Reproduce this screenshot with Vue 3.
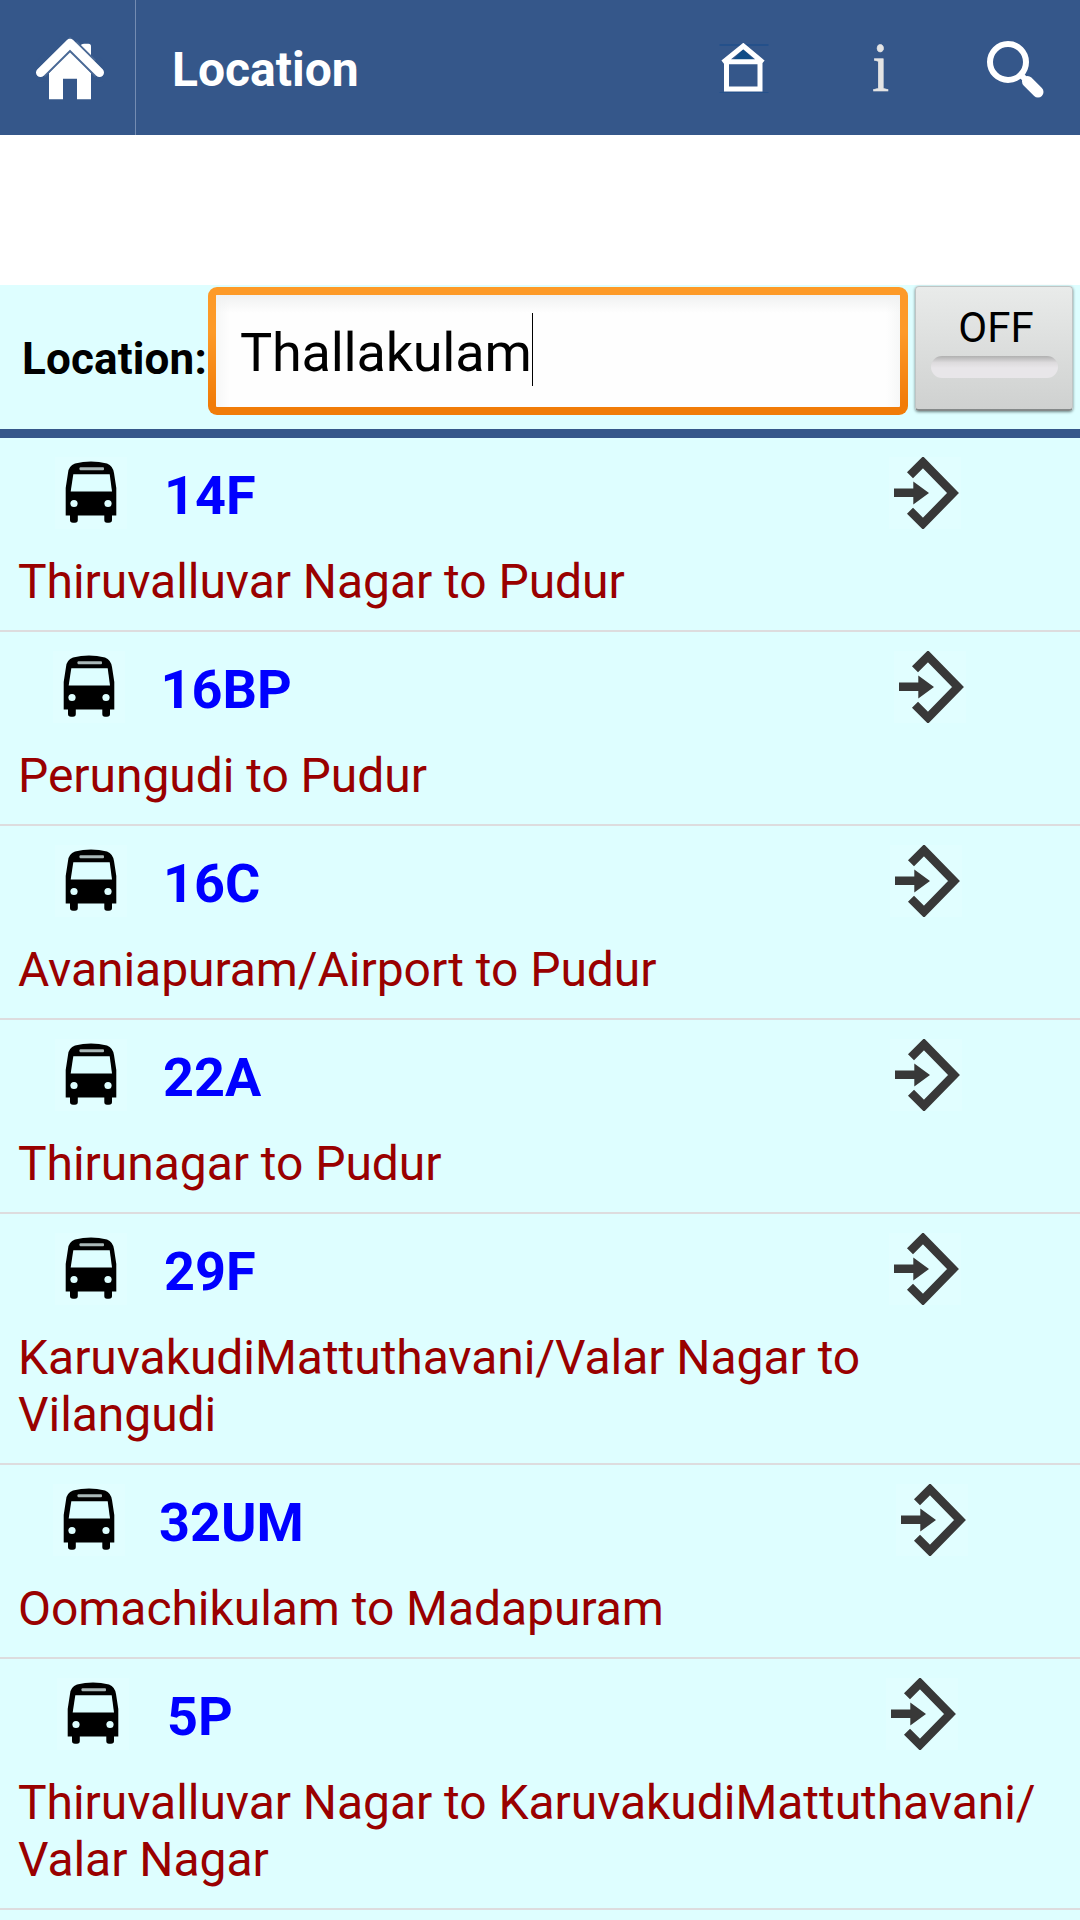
<script setup>
const routes = [
  { no: '14F', name: 'Thiruvalluvar Nagar to Pudur', bus: 55, num: 164, go: 889 },
  { no: '16BP', name: 'Perungudi to Pudur', bus: 53, num: 160.5, go: 894 },
  { no: '16C', name: 'Avaniapuram/Airport to Pudur', bus: 54.5, num: 163, go: 890 },
  { no: '22A', name: 'Thirunagar to Pudur', bus: 54.5, num: 163, go: 890 },
  { no: '29F', name: 'KaruvakudiMattuthavani/Valar Nagar to Vilangudi', bus: 55, num: 164, go: 889 },
  { no: '32UM', name: 'Oomachikulam to Madapuram', bus: 52.5, num: 159, go: 895.5 },
  { no: '5P', name: 'Thiruvalluvar Nagar to KaruvakudiMattuthavani/ Valar Nagar', bus: 56.5, num: 167, go: 885.5 }
]
</script>

<template>
  <div class="screen">
    <header class="bar">
      <div class="home">
        <svg width="72" height="66" viewBox="0 0 72 66">
          <path d="M46 10.500V9.500Q46 7.700 49 7.700H53.500Q56 7.700 56 10.500V20.500z" fill="#fff" />
          <path d="M14 37V63.300H28V42.700H42V63.300H56V37L35 15z" fill="#fff" />
          <path d="M5.500 36.500L35 7.300 64.500 36.500" fill="none" stroke="#4a6996" stroke-width="13" stroke-linejoin="round" />
          <path d="M5.500 36.500L35 7.300 64.500 36.500" fill="none" stroke="#fff" stroke-width="9" stroke-linecap="round" stroke-linejoin="round" />
          <path d="M-2 33L35 -3.500 43 4M62 23L72 33" fill="none" stroke="#35578a" stroke-width="6" />
          <path d="M2 44H13.500M56.500 44H68" stroke="#35578a" stroke-width="3" />
        </svg>
      </div>
      <h1 class="title">Location</h1>
      <svg class="house" width="50" height="50" viewBox="0 0 50 50">
        <path d="M.5 2H49.500M.5 50H49.500" stroke="#24508a" stroke-width="2" />
        <path d="M14 17L24.300 6 35 17z" fill="#0f4c86" />
        <path d="M4 19.500L24.300 3 44 19.500M7.500 18.700V46H41V18.700z" fill="none" stroke="#fff" stroke-width="5" />
      </svg>
      <span class="info">i</span>
      <svg class="search" width="60" height="60" viewBox="0 0 60 60">
        <circle cx="22" cy="22" r="18" fill="none" stroke="#fff" stroke-width="6" />
        <path d="M34 34l7 7" stroke="#fff" stroke-width="6" />
        <path d="M41.500 41.500L52 52" stroke="#fff" stroke-width="11" stroke-linecap="round" />
      </svg>
    </header>
    <section class="filter">
      <label class="label">Location:</label>
      <div class="field"><span>Thallakulam</span><i class="caret"></i></div>
      <button class="toggle"><span>OFF</span><i class="slot"></i></button>
    </section>
    <ul class="list">
      <li v-for="r in routes" :key="r.no" class="row">
        <div class="top">
          <svg class="icon" :style="{ marginLeft: r.bus + 'px' }" width="72" height="72" viewBox="0 0 72 72">
            <path d="M13 16Q13.500 9 20 6.500Q36 2.500 52 6.500Q58 9 59 16L61.300 31V58.500H57V63Q57 65.800 54 65.800H52Q49.300 65.800 49.300 63V58.500H22.800V63Q22.800 65.800 20 65.800H18Q15 65.800 15 63V58.500H10.700V31z" />
            <path d="M18.300 17.300H54.700L57 34.500H15.700z" fill="#defeff" />
            <rect x="24.500" y="10.300" width="24.500" height="3" rx="1" fill="#aab8b8" />
            <circle cx="19" cy="46.500" r="3.600" fill="#defeff" />
            <circle cx="53" cy="46.500" r="3.600" fill="#defeff" />
          </svg>
          <strong class="no" :style="{ width: r.go - r.num + 'px', marginLeft: r.num - r.bus - 72 + 'px' }">{{ r.no }}</strong>
          <svg class="icon" width="72" height="72" viewBox="0 0 72 72">
            <path d="M21 18.300L34 5.300 64 36 34 66.700 21 53.700" fill="none" stroke="#383838" stroke-width="8.500" />
            <path d="M5 31.500H24.300V24.500L40 36 24.300 47.500V40H5z" fill="#383838" />
          </svg>
        </div>
        <p class="name">{{ r.name }}</p>
      </li>
    </ul>
  </div>
</template>

<style>
body { margin: 0; background: #defeff; }
</style>

<style scoped>
.screen { width: 1080px; height: 1920px; overflow: hidden; background: #defeff; font-family: Roboto, sans-serif; color: #000; }
.bar { height: 135px; display: flex; align-items: center; background: #35578a; color: #fff; }
.home { width: 135px; height: 135px; box-sizing: border-box; padding: 36px 0 0 35px; box-shadow: 1px 0 #748cb2; }
.home svg { display: block; }
.title { margin: 4px 0 0; padding-left: 37px; width: 547px; font-size: 48px; line-height: 56px; font-weight: 700; }
.house { margin-bottom: -1px; }
.info { width: 20px; margin-left: 102px; font: 69px/70px "Liberation Serif", serif; color: #e4e4e4; -webkit-text-stroke: .6px #e4e4e4; transform: scaleX(.88); }
.search { margin-left: 94.500px; margin-top: 4px; }
.filter { height: 144px; border-top: 150px solid #fff; border-bottom: 9px solid #35578a; display: flex; align-items: flex-start; }
.label { width: 208px; box-sizing: border-box; padding: 48px 0 0 22px; font-size: 44px; line-height: 52px; font-weight: 700; letter-spacing: .16px; white-space: nowrap; }
.field { width: 700px; height: 128px; margin-top: 2px; box-sizing: border-box; border: 8px solid transparent; border-radius: 9px; padding-left: 24px; display: flex; align-items: flex-start; font-size: 54px; line-height: 64px; letter-spacing: -.22px;
  background: linear-gradient(#f0f1f1, rgba(254, 254, 254, 0) 18px) padding-box, linear-gradient(90deg, #f6f7f7, #fefefe 14px, #fefefe calc(100% - 14px), #f6f7f7) padding-box, linear-gradient(#fd9a28 35%, #f17c08 90%) border-box; }
.field span { margin-top: 26px; }
.caret { width: 1px; height: 73px; margin-top: 18px; background: #000; }
.toggle { width: 158px; height: 125px; margin: 1px 0 0 6.500px; padding: 16px 0 0 2px; border: 1px solid #bfc4c4; border-bottom: 2px solid #858989; border-radius: 4px; background: linear-gradient(#e9ebea, #cfd1d0); box-shadow: 0 1px 3px #6d8282; display: flex; flex-direction: column; align-items: center; justify-content: flex-start; font: 42px/50px Roboto, sans-serif; color: #000; }
.toggle span { padding-left: 3px; }
.slot { width: 127px; height: 22px; margin-top: 3px; border-radius: 11px; background: linear-gradient(#b0b0b0, #dddbdd 30%, #e8e6e9 55%); }
.list { margin: 0; padding: 0; list-style: none; }
.row { border-bottom: 2px solid #dddcde; padding: 19px 18px 20px 0; }
.top { height: 72px; display: flex; }
.no { flex: none; font-size: 54px; line-height: 78px; color: #00f; }
.icon { flex: none; background: rgba(255, 255, 255, .1); }
.name { margin: 24px 0 0; padding-left: 18px; font-size: 48px; line-height: 57px; letter-spacing: -.05px; color: #900; }
</style>
